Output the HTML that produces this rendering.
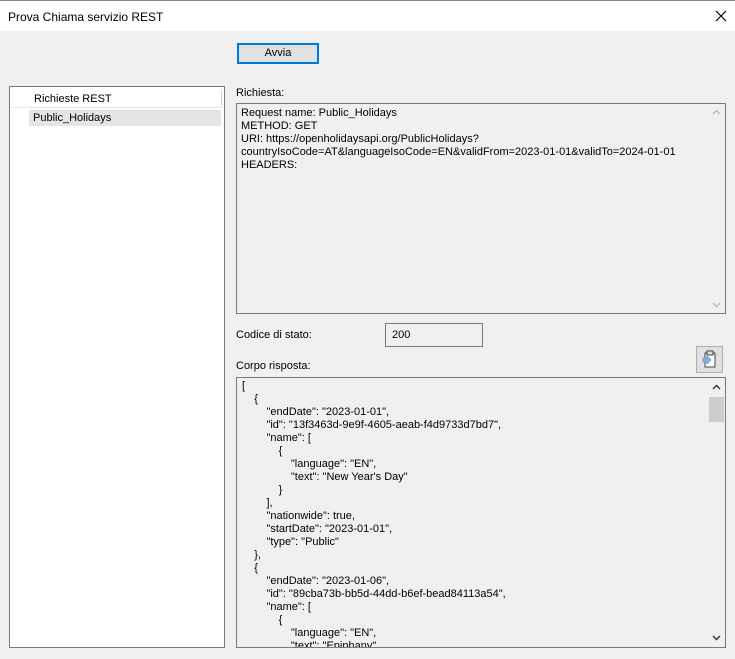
<!DOCTYPE html>
<html><head><meta charset="utf-8"><style>
*{margin:0;padding:0;box-sizing:border-box}
body{width:735px;height:659px;background:#f0f0f0;font-family:"Liberation Sans",sans-serif;font-size:11px;color:#000;position:relative;overflow:hidden}
.abs{position:absolute}
.title{left:0;top:0;width:735px;height:31px;background:#fff;border-top:1px solid #888}
.title span{position:absolute;left:8px;top:9px;font-size:12px}
.box{border:1px solid #7a7a7a;background:#f0f0f0}
pre{font-family:"Liberation Sans",sans-serif;font-size:11px;line-height:13px}
.sb{position:absolute;right:0;top:0;bottom:0;width:17px;background:#f0f0f0}
</style></head><body>
<div class="abs title"><span>Prova Chiama servizio REST</span>
<svg class="abs" style="left:715px;top:9px" width="12" height="12"><path d="M1 1L11 11M11 1L1 11" stroke="#000" stroke-width="1.2"/></svg></div>
<div class="abs" style="left:237px;top:43px;width:82px;height:21px;border:2px solid #0078d7;background:#e1e1e1;text-align:center;line-height:17px;font-size:11px">Avvia</div>
<div class="abs box" style="left:9px;top:86px;width:216px;height:562px;background:#fff">
<div class="abs" style="left:1px;top:1px;width:212px;height:20px;border-bottom:1px solid #e5e5e5"><span class="abs" style="left:23px;top:5px">Richieste REST</span><div class="abs" style="left:210px;top:3px;width:1px;height:14px;background:#ccc"></div></div>
<div class="abs" style="left:19px;top:23px;width:192px;height:16px;background:#e5e5e5"><span class="abs" style="left:4px;top:2px">Public_Holidays</span></div>
</div>
<div class="abs" style="left:236px;top:87px">Richiesta:</div>
<div class="abs box" style="left:236px;top:103px;width:490px;height:211px">
<pre class="abs" style="left:4px;top:3px">Request name: Public_Holidays
METHOD: GET
URI: https://openholidaysapi.org/PublicHolidays?
countryIsoCode=AT&amp;languageIsoCode=EN&amp;validFrom=2023-01-01&amp;validTo=2024-01-01
HEADERS:</pre>
<div class="sb"><svg class="abs" style="left:4px;top:5px" width="9" height="6"><path d="M1 5L4.5 1.5L8 5" stroke="#bbb" stroke-width="1.3" fill="none"/></svg><svg class="abs" style="left:4px;bottom:5px" width="9" height="6"><path d="M1 1L4.5 4.5L8 1" stroke="#bbb" stroke-width="1.3" fill="none"/></svg></div>
</div>
<div class="abs" style="left:236px;top:329px">Codice di stato:</div>
<div class="abs box" style="left:385px;top:323px;width:98px;height:24px"><span class="abs" style="left:6px;top:5px">200</span></div>
<div class="abs" style="left:236px;top:360px">Corpo risposta:</div>
<div class="abs" style="left:696px;top:346px;width:27px;height:27px;border:1px solid #adadad;background:#e1e1e1">
<svg width="25" height="25"><rect x="8" y="6" width="10" height="14" fill="#fff" stroke="#444"/><rect x="10" y="4" width="6" height="4" fill="#ddd" stroke="#444"/><path d="M6 11h4v-2l4 4-4 4v-2H6z" fill="#8fb4e3" stroke="#5a8ad0" stroke-width=".7"/></svg></div>
<div class="abs box" style="left:236px;top:377px;width:490px;height:271px;overflow:hidden">
<pre class="abs" style="left:5px;top:2px">[
    {
        "endDate": "2023-01-01",
        "id": "13f3463d-9e9f-4605-aeab-f4d9733d7bd7",
        "name": [
            {
                "language": "EN",
                "text": "New Year's Day"
            }
        ],
        "nationwide": true,
        "startDate": "2023-01-01",
        "type": "Public"
    },
    {
        "endDate": "2023-01-06",
        "id": "89cba73b-bb5d-44dd-b6ef-bead84113a54",
        "name": [
            {
                "language": "EN",
                "text": "Epiphany",</pre>
<div class="sb"><svg class="abs" style="left:4px;top:6px" width="9" height="6"><path d="M1 5L4.5 1.5L8 5" stroke="#333" stroke-width="1.4" fill="none"/></svg><div class="abs" style="left:1px;top:19px;width:15px;height:25px;background:#cdcdcd"></div><svg class="abs" style="left:4px;bottom:6px" width="9" height="6"><path d="M1 1L4.5 4.5L8 1" stroke="#333" stroke-width="1.4" fill="none"/></svg></div>
</div>
</body></html>
